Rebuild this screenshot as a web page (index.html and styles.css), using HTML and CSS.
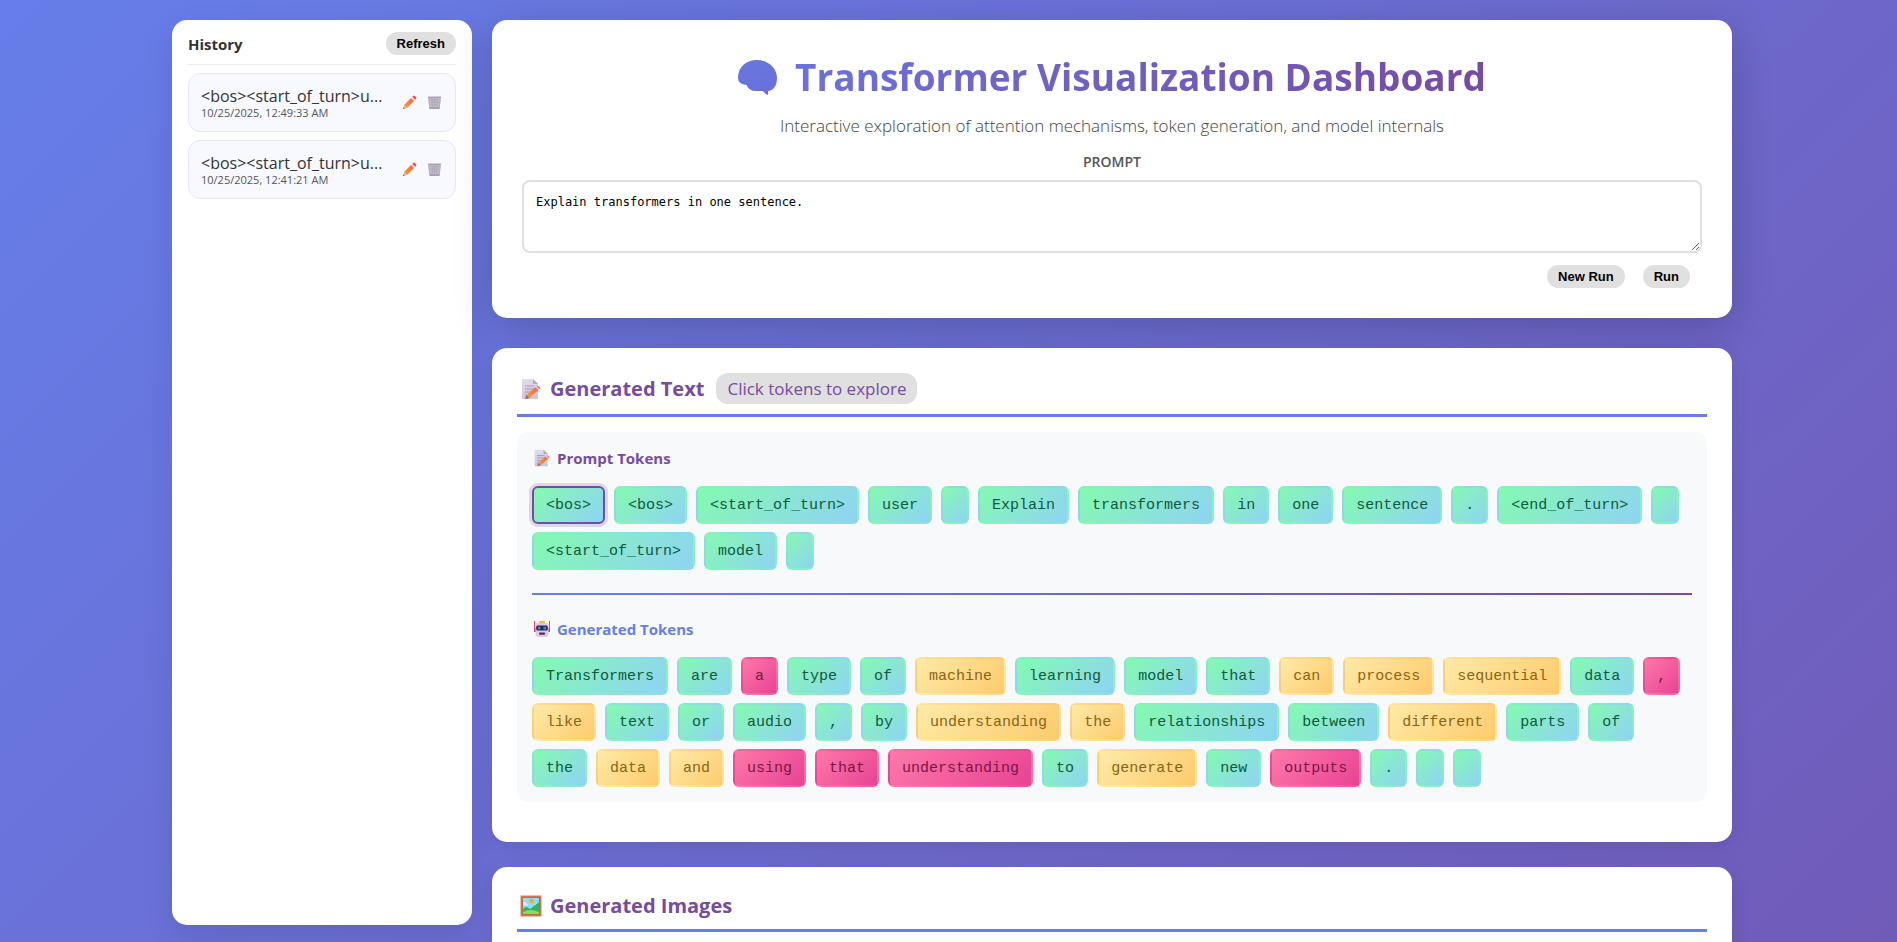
FILE: index.html
```html
<!DOCTYPE html>
<html lang="en">
<head>
<meta charset="utf-8">
<meta name="viewport" content="width=device-width, initial-scale=1">
<title>Transformer Visualization Dashboard</title>
<link rel="stylesheet" href="styles.css">
</head>
<body>
<svg class="sprite" aria-hidden="true">
  <defs>
    <linearGradient id="pencil-body" x1="0" y1="1" x2="1" y2="0"><stop offset="0" stop-color="#ff9a3c"/><stop offset="1" stop-color="#f4663a"/></linearGradient>
    <linearGradient id="paper" x1="0" y1="0" x2="0" y2="1"><stop offset="0" stop-color="#e2dcea"/><stop offset="1" stop-color="#cfc4da"/></linearGradient>
    <linearGradient id="title-ink" x1="0" y1="0" x2="1" y2="1"><stop offset="0" stop-color="#6877e0"/><stop offset="1" stop-color="#6a70d8"/></linearGradient>
    <symbol id="pencil" viewBox="0 0 16 16">
      <path d="M1 15 2.2 10.6 5.4 13.8Z" fill="#d9b9b0"/>
      <path d="M1 15 1.5 13.2 2.8 14.5Z" fill="#5b4a5e"/>
      <path d="M2.2 10.6 9.6 3.2 12.8 6.4 5.4 13.8Z" fill="url(#pencil-body)"/>
      <path d="M9.6 3.2 11 1.8 14.2 5 12.8 6.4Z" fill="#dcd3e6"/>
      <path d="M11 1.8 11.8 1Q12.8.2 13.8 1.2L14.8 2.2Q15.8 3.2 15 4.2L14.2 5Z" fill="#fb4d4d"/>
    </symbol>
    <symbol id="bin" viewBox="0 0 16 16">
      <path d="M1.500 2.500H14.500L13.200 14.500H2.800Z" fill="#c3bccd"/>
      <path d="M4 5H12M4 7.500H12M4.500 10H11.500M5.500 4V13M8 4V13M10.500 4V13" stroke="#aaa1b6" stroke-width=".7" fill="none"/>
      <path d="M1.800 4 3 14M14.200 4 13 14" stroke="#b0a6bd" stroke-width="1" fill="none"/>
      <rect x="1" y="1.500" width="14" height="2" rx=".6" fill="#aaa3b3"/>
      <rect x="2.600" y="13" width="10.800" height="1.800" rx=".5" fill="#a79cb8"/>
    </symbol>
    <symbol id="memo" viewBox="0 0 22 22">
      <path d="M2 1H13L18 6V21H2Z" fill="url(#paper)"/>
      <path d="M13 1V6H18Z" fill="#b3a8c2"/>
      <path d="M5 8H14M5 11H15M5 14H12M5 17H9" stroke="#a79db5" stroke-width="1.200"/>
      <path d="M5 21 6.500 17 9.500 20Z" fill="#8c6a70"/>
      <path d="M6.500 17 15.500 9 18.500 12 9.500 20Z" fill="url(#pencil-body)"/>
      <path d="M15.500 9 16.500 8 19.500 11 18.500 12Z" fill="#e9d8e0"/>
      <path d="M16.500 8 17.500 7.500 20.500 10 19.500 11Z" fill="#fb4d4d"/>
    </symbol>
    <symbol id="robot" viewBox="0 0 18 18">
      <path d="M1.500 1V12M16.500 1V12" stroke="#e0457b" stroke-width="1"/>
      <rect x="6" y="1" width="6" height="3" rx="1" fill="#f5b82e"/>
      <rect x="1" y="8" width="16" height="4" rx="1" fill="#d8437c"/>
      <path d="M2.500 5Q2.500 3 5 3H13Q15.500 3 15.500 5V14Q15.500 17 12.500 17H5.500Q2.500 17 2.500 14Z" fill="#d9cbe6"/>
      <rect x="3.200" y="5.500" width="11.600" height="5" rx="1.500" fill="#33264d"/>
      <circle cx="6.200" cy="8" r="1.500" fill="#2a8fe0"/><circle cx="11.800" cy="8" r="1.500" fill="#2a8fe0"/>
      <rect x="6" y="12.500" width="6" height="2.200" rx=".8" fill="#45335c"/>
    </symbol>
    <symbol id="picture" viewBox="0 0 22 22">
      <rect x=".5" y=".5" width="21" height="21" fill="#d08a62"/>
      <rect x="1.500" y="1.500" width="19" height="19" fill="#b96f4b"/>
      <rect x="3" y="3" width="16" height="16" fill="#8edcf6"/>
      <circle cx="11.500" cy="6" r="2.200" fill="#f7a823"/>
      <path d="M3 7Q5 6 6.500 8.500 8.500 9 8 10.500H3ZM19 8Q16.500 6.500 15.500 9L14 11H19Z" fill="#e7e9fb"/>
      <path d="M3 14Q6 10 10 14L19 7V19H3Z" fill="#35b25f"/>
      <path d="M3 17Q10 13 19 17V19H3Z" fill="#8edc58"/>
    </symbol>
    <symbol id="brain" viewBox="0 0 39 35">
      <path d="M0 18C0 7 8 0 19 0 30 0 39 8 39 18 39 26 35 31 30 31L30 35Q27 34 25 31H18Q11 31 8.500 25 0 24 0 18Z" fill="url(#title-ink)"/>
    </symbol>
  </defs>
</svg>

<div class="layout">
  <aside class="history">
    <div class="history-head">
      <h2 class="history-title">History</h2>
      <button class="pill" type="button">Refresh</button>
    </div>
    <ul class="history-list">
      <li class="history-item">
        <div class="history-text">
          <div class="history-name">&lt;bos&gt;&lt;start_of_turn&gt;u...</div>
          <div class="history-date">10/25/2025, 12:49:33 AM</div>
        </div>
        <div class="history-actions">
          <button class="icon-button" type="button" aria-label="Rename"><svg class="icon-small"><use href="#pencil"/></svg></button>
          <button class="icon-button" type="button" aria-label="Delete"><svg class="icon-small"><use href="#bin"/></svg></button>
        </div>
      </li>
      <li class="history-item">
        <div class="history-text">
          <div class="history-name">&lt;bos&gt;&lt;start_of_turn&gt;u...</div>
          <div class="history-date">10/25/2025, 12:41:21 AM</div>
        </div>
        <div class="history-actions">
          <button class="icon-button" type="button" aria-label="Rename"><svg class="icon-small"><use href="#pencil"/></svg></button>
          <button class="icon-button" type="button" aria-label="Delete"><svg class="icon-small"><use href="#bin"/></svg></button>
        </div>
      </li>
    </ul>
  </aside>

  <main class="main">
    <header class="hero">
      <h1 class="hero-title"><svg class="icon-brain" aria-hidden="true"><use href="#brain"/></svg><span class="hero-name">Transformer Visualization Dashboard</span></h1>
      <p class="hero-sub">Interactive exploration of attention mechanisms, token generation, and model internals</p>
      <label class="prompt-label" for="prompt">PROMPT</label>
      <textarea class="prompt" id="prompt">Explain transformers in one sentence.</textarea>
      <div class="actions">
        <button class="pill" type="button">New Run</button>
        <button class="pill" type="button">Run</button>
      </div>
    </header>

    <section class="card">
      <h2 class="card-title"><svg class="icon-large" aria-hidden="true"><use href="#memo"/></svg>Generated Text<span class="hint">Click tokens to explore</span></h2>
      <div class="tokens-box">
        <h3 class="group-title"><svg class="icon-medium" aria-hidden="true"><use href="#memo"/></svg>Prompt Tokens</h3>
        <div class="tokens">
          <button class="token selected">&lt;bos&gt;</button>
          <button class="token">&lt;bos&gt;</button>
          <button class="token">&lt;start_of_turn&gt;</button>
          <button class="token">user</button>
          <button class="token" aria-label="newline"></button>
          <button class="token">Explain</button>
          <button class="token">transformers</button>
          <button class="token">in</button>
          <button class="token">one</button>
          <button class="token">sentence</button>
          <button class="token">.</button>
          <button class="token">&lt;end_of_turn&gt;</button>
          <button class="token" aria-label="newline"></button>
          <button class="token">&lt;start_of_turn&gt;</button>
          <button class="token">model</button>
          <button class="token" aria-label="newline"></button>
        </div>
        <hr class="divider">
        <h3 class="group-title generated"><svg class="icon-medium" aria-hidden="true"><use href="#robot"/></svg>Generated Tokens</h3>
        <div class="tokens">
          <button class="token">Transformers</button>
          <button class="token">are</button>
          <button class="token low">a</button>
          <button class="token">type</button>
          <button class="token">of</button>
          <button class="token mid">machine</button>
          <button class="token">learning</button>
          <button class="token">model</button>
          <button class="token">that</button>
          <button class="token mid">can</button>
          <button class="token mid">process</button>
          <button class="token mid">sequential</button>
          <button class="token">data</button>
          <button class="token low">,</button>
          <button class="token mid">like</button>
          <button class="token">text</button>
          <button class="token">or</button>
          <button class="token">audio</button>
          <button class="token">,</button>
          <button class="token">by</button>
          <button class="token mid">understanding</button>
          <button class="token mid">the</button>
          <button class="token">relationships</button>
          <button class="token">between</button>
          <button class="token mid">different</button>
          <button class="token">parts</button>
          <button class="token">of</button>
          <button class="token">the</button>
          <button class="token mid">data</button>
          <button class="token mid">and</button>
          <button class="token low">using</button>
          <button class="token low">that</button>
          <button class="token low">understanding</button>
          <button class="token">to</button>
          <button class="token mid">generate</button>
          <button class="token">new</button>
          <button class="token low">outputs</button>
          <button class="token">.</button>
          <button class="token" aria-label="newline"></button>
          <button class="token" aria-label="end"></button>
        </div>
      </div>
    </section>

    <section class="card">
      <h2 class="card-title"><svg class="icon-large" aria-hidden="true"><use href="#picture"/></svg>Generated Images</h2>
    </section>
  </main>
</div>
</body>
</html>
```

FILE: styles.css
```css
* { box-sizing: border-box; }

body {
  margin: 0;
  height: 100vh;
  overflow: hidden;
  padding: 20px;
  font-family: "Open Sans", "Noto Sans", sans-serif;
  color: #333;
  background: linear-gradient(135deg, #667eea 0%, #764ba2 100%) 0 0 / 100% 240vh no-repeat;
}

h1, h2, h3, p, ul { margin: 0; padding: 0; }

.sprite { position: absolute; width: 0; height: 0; }

.layout {
  display: grid;
  grid-template-columns: 300px minmax(0, 1fr);
  gap: 20px;
  align-items: start;
  max-width: 1567px;
  margin: 0 auto;
  padding-left: 7px;
}

.history {
  height: calc(100vh - 37px);
  padding: 12px 16px;
  background: #fff;
  border-radius: 15px;
  box-shadow: 0 10px 30px rgba(0, 0, 0, 0.1);
}

.history-head {
  display: flex;
  justify-content: space-between;
  align-items: flex-start;
  padding-bottom: 8px;
  border-bottom: 1px solid #eee;
  margin-bottom: 8px;
}

.history-title {
  font-size: 15px;
  line-height: 24px;
  font-weight: 700;
}

.pill {
  border: 0;
  border-radius: 12px;
  padding: 4px 11px;
  background: #e0e0e0;
  color: #000;
  font: bold 13px/15px "Liberation Sans", Arial, sans-serif;
}

.history-list {
  display: flex;
  flex-direction: column;
  gap: 8px;
  list-style: none;
}

.history-item {
  display: flex;
  align-items: center;
  justify-content: space-between;
  padding: 12px;
  border: 1px solid #e6e6ff;
  border-radius: 12px;
  background: #f8f9ff;
}

.history-name {
  font-size: 16px;
  line-height: 20px;
  font-weight: 500;
}

.history-date {
  font-size: 11px;
  line-height: 13px;
  color: #555;
}

.history-actions { display: flex; gap: 8px; }

.icon-button {
  display: flex;
  padding: 1px;
  border: 0;
  background: none;
}

.icon-small { width: 15px; height: 15px; }
.icon-medium { width: 18px; height: 18px; }
.icon-large { width: 22px; height: 22px; }
.icon-brain { width: 39px; height: 35px; }

.main { min-width: 0; }

.hero {
  padding: 30px;
  margin-bottom: 30px;
  background: #fff;
  border-radius: 15px;
  box-shadow: 0 10px 40px rgba(0, 0, 0, 0.2);
  text-align: center;
}

.hero-title {
  display: flex;
  justify-content: center;
  align-items: center;
  gap: 18px;
  font-size: 37px;
  line-height: 54px;
  font-weight: 700;
  margin-bottom: 10px;
}

.hero-name {
  background: linear-gradient(100deg, #6a72da, #764ba2);
  -webkit-background-clip: text;
  background-clip: text;
  color: transparent;
}

.hero-sub {
  font-size: 17px;
  line-height: 24px;
  font-weight: 300;
  color: #444;
  margin-bottom: 14px;
}

.prompt-label {
  display: block;
  font-size: 14px;
  line-height: 20px;
  font-weight: 600;
  color: #555;
  margin-bottom: 8px;
}

.prompt {
  display: block;
  width: 100%;
  height: 73px;
  padding: 13px 12px;
  border: 2px solid #e0e0e0;
  border-radius: 8px;
  background: #fff;
  color: #000;
  font: 12px/15px "DejaVu Sans Mono", monospace;
  resize: vertical;
}

.actions {
  display: flex;
  justify-content: flex-end;
  gap: 18px;
  padding: 12px 12px 0;
}

.card {
  padding: 25px 25px 40px;
  margin-bottom: 25px;
  background: #fff;
  border-radius: 15px;
  box-shadow: 0 5px 20px rgba(0, 0, 0, 0.1);
}

.card-title {
  display: flex;
  align-items: center;
  gap: 8px;
  padding: 0 0 10px 3px;
  border-bottom: 3px solid #667eea;
  margin-bottom: 15px;
  font-size: 20px;
  line-height: 27px;
  font-weight: 700;
  color: #764ba2;
}

.hint {
  margin-left: 4px;
  padding: 2px 11px;
  border-radius: 12px;
  background: #e0e0e0;
  font-size: 17px;
  font-weight: 500;
}

.tokens-box {
  padding: 15px;
  border-radius: 10px;
  background: #f8f9fb;
}

.group-title {
  display: flex;
  align-items: center;
  gap: 6px;
  padding-left: 1px;
  margin-bottom: 17px;
  font-size: 15px;
  line-height: 22px;
  font-weight: 700;
  color: #764ba2;
}

.generated { color: #667eea; }

.tokens {
  display: flex;
  flex-wrap: wrap;
  gap: 8px 9px;
}

.token {
  min-height: 38px;
  padding: 9px 12px 7px;
  border: 2px solid transparent;
  border-radius: 6px;
  background: linear-gradient(135deg, #84fab0 0%, #8fd3f4 100%);
  color: #0b5b3a;
  font: 15px/18px "Courier New", "Liberation Mono", monospace;
}

.mid {
  background: linear-gradient(135deg, #ffeaa7 0%, #fdcb6e 100%);
  color: #8a6414;
}

.low {
  background: linear-gradient(135deg, #fd79a8 0%, #e84393 100%);
  color: #7a1645;
}

.selected {
  border-color: #764ba2;
  box-shadow: 0 0 0 3px rgba(118, 75, 162, 0.2);
}

.divider {
  height: 2px;
  margin: 23px 0;
  border: 0;
  background: linear-gradient(90deg, #667eea, #764ba2);
}
```
